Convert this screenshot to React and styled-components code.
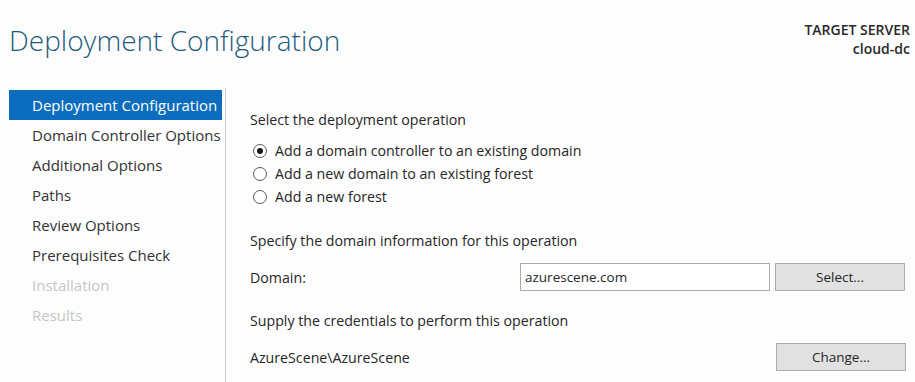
import React from "react";
import styled, { createGlobalStyle } from "styled-components";

const GlobalStyle = createGlobalStyle`
  html, body {
    margin: 0;
    padding: 0;
    background: #fdfdfd;
  }
  body {
    font-family: "Open Sans", "Noto Sans", sans-serif;
    color: #1e1e1e;
  }
`;

const Page = styled.div`
  width: 915px;
  height: 382px;
  overflow: hidden;
  display: flex;
  flex-direction: column;
`;

const Header = styled.header`
  height: 88px;
  display: flex;
  justify-content: space-between;
  align-items: flex-start;
  padding: 0 5px 0 9px;
`;

const Title = styled.h1`
  margin: 21px 0 0;
  font-size: 28px;
  font-weight: 300;
  color: #1f5c7c;
`;

const ServerInfo = styled.div`
  margin-top: 20px;
  text-align: right;
  font-size: 14px;
  font-weight: 600;
  line-height: 19px;
  color: #2a2a2a;
`;

const Body = styled.div`
  flex: 1;
  display: flex;
`;

const Sidebar = styled.nav`
  width: 216px;
  margin-left: 9px;
  padding-top: 2px;
  border-right: 1px solid #c9c9c9;
  display: flex;
  flex-direction: column;
`;

const NavItem = styled.div`
  height: 30px;
  line-height: 30px;
  padding-left: 23px;
  font-size: 15px;
  white-space: nowrap;
  background: ${(p) => (p.$active ? "#0c6cbd" : "transparent")};
  color: ${(p) => (p.$active ? "#ffffff" : p.$disabled ? "#c6c6c6" : "#333333")};
  margin-right: 3px;
`;

const Content = styled.main`
  flex: 1;
  padding: 19px 9px 0 24px;
  font-size: 14.2px;
  color: #262626;
`;

const SectionLabel = styled.div`
  height: 26px;
  line-height: 26px;
  margin-bottom: ${(p) => p.$gap || 0}px;
`;

const RadioGroup = styled.div`
  display: flex;
  flex-direction: column;
  padding-left: 3px;
  margin-bottom: 20px;
`;

const RadioRow = styled.label`
  display: flex;
  align-items: center;
  height: 23px;
  gap: 8px;
`;

const RadioCircle = styled.span`
  width: 12px;
  height: 12px;
  border: 1px solid #5a5a5a;
  border-radius: 50%;
  display: inline-flex;
  align-items: center;
  justify-content: center;
  background: #fff;
  &::after {
    content: "";
    width: 6px;
    height: 6px;
    border-radius: 50%;
    background: ${(p) => (p.$checked ? "#1a1a1a" : "transparent")};
  }
`;

const FieldRow = styled.div`
  display: flex;
  align-items: center;
  height: 30px;
  margin-bottom: ${(p) => p.$gap || 0}px;
`;

const FieldLabel = styled.div`
  width: 270px;
`;

const TextInput = styled.div`
  width: 244px;
  height: 26px;
  line-height: 26px;
  border: 1px solid #ababab;
  background: #fff;
  padding-left: 4px;
  font-size: 13.5px;
`;

const Spacer = styled.div`
  flex: 1;
`;

const Button = styled.button`
  margin-left: ${(p) => p.$ml || 0}px;
  width: 130px;
  height: 28px;
  border: 1px solid #adadad;
  background: #e1e1e1;
  font-family: inherit;
  font-size: 13.5px;
  color: #262626;
  padding: 0;
`;

const navItems = [
  { label: "Deployment Configuration", active: true },
  { label: "Domain Controller Options" },
  { label: "Additional Options" },
  { label: "Paths" },
  { label: "Review Options" },
  { label: "Prerequisites Check" },
  { label: "Installation", disabled: true },
  { label: "Results", disabled: true },
];

const operations = [
  { label: "Add a domain controller to an existing domain", checked: true },
  { label: "Add a new domain to an existing forest" },
  { label: "Add a new forest" },
];

export default function App() {
  return (
    <>
      <GlobalStyle />
      <Page>
        <Header>
          <Title>Deployment Configuration</Title>
          <ServerInfo>
            TARGET SERVER
            <br />
            cloud-dc
          </ServerInfo>
        </Header>
        <Body>
          <Sidebar>
            {navItems.map((item) => (
              <NavItem key={item.label} $active={item.active} $disabled={item.disabled}>
                {item.label}
              </NavItem>
            ))}
          </Sidebar>
          <Content>
            <SectionLabel $gap={6}>Select the deployment operation</SectionLabel>
            <RadioGroup>
              {operations.map((op) => (
                <RadioRow key={op.label}>
                  <RadioCircle $checked={op.checked} />
                  {op.label}
                </RadioRow>
              ))}
            </RadioGroup>
            <SectionLabel $gap={8}>Specify the domain information for this operation</SectionLabel>
            <FieldRow $gap={16}>
              <FieldLabel>Domain:</FieldLabel>
              <TextInput>azurescene.com</TextInput>
              <Button $ml={5}>Select...</Button>
            </FieldRow>
            <SectionLabel $gap={8}>Supply the credentials to perform this operation</SectionLabel>
            <FieldRow>
              <FieldLabel>AzureScene\AzureScene</FieldLabel>
              <Spacer />
              <Button>Change...</Button>
            </FieldRow>
          </Content>
        </Body>
      </Page>
    </>
  );
}
